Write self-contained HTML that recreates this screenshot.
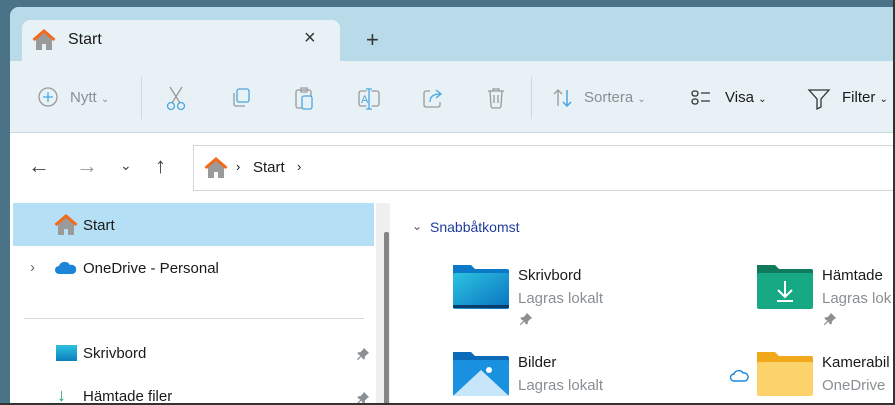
<!DOCTYPE html><html><head><meta charset="utf-8"><style>
*{margin:0;padding:0;box-sizing:border-box}
body{width:895px;height:405px;overflow:hidden;background:#4a7388;font-family:"Segoe UI","Liberation Sans",sans-serif;position:relative;color:#1a1a1a}
.win{position:absolute;left:10px;top:7px;width:883px;height:396px;background:#fff;border-radius:9px 0 0 0;overflow:hidden}
.title{position:absolute;left:0;top:0;width:100%;height:54px;background:#b9dae9}
.tab{position:absolute;left:12px;top:13px;width:318px;height:42px;background:#e7f1f6;border-radius:8px 8px 0 0}
.tb{position:absolute;left:0;top:54px;width:100%;height:72px;background:#e7f1f6;border-bottom:1px solid #c8d8e0}
.t{position:absolute;font-size:15px;white-space:nowrap}
.g{color:#8a8f93}
.ic{position:absolute}
.addr{position:absolute;left:183px;top:138px;width:710px;height:46px;border:1px solid #d6d6d6;border-right:none}
.sel{position:absolute;left:3px;top:196px;width:361px;height:43px;background:#b4dff5}
.sb{position:absolute;left:366px;top:196px;width:14px;height:200px;background:#f0f0f0}
.thumb{position:absolute;left:374px;top:225px;width:5px;height:175px;background:#858585;border-radius:2px}
</style></head><body>
<svg width="0" height="0" style="position:absolute"><defs><symbol id="pin" viewBox="0 0 16 16"><path d="M9 1l6 6-2 1-3 3 0 3-2 0-2-3-4 4-1-1 4-4-3-2 0-2 3 0 3-3z" fill="#8a8f93"/></symbol></defs></svg>
<div class="win">
<div class="title"></div>
<div class="tab"></div>
<svg class="ic" style="left:22px;top:22px" width="24" height="22" viewBox="0 0 24 22"><path d="M4 10v11h6v-6h4v6h6V10L12 3z" fill="#9a9a9a"/><path d="M1.5 11L12 2l10.5 9" fill="none" stroke="#f26b1d" stroke-width="3"/></svg>
<div class="t" style="left:58px;top:24px;font-size:16px">Start</div>
<div class="t" style="left:294px;top:20px;font-size:20px;color:#333">×</div>
<div class="t" style="left:356px;top:20px;font-size:22px;color:#333">+</div>
<div class="tb"></div>
<svg class="ic" style="left:28px;top:80px" width="20" height="20"><circle cx="10" cy="10" r="9" fill="none" stroke="#999" stroke-width="1.3"/><path d="M10 5v10M5 10h10" stroke="#4aa6e0" stroke-width="1.3"/></svg>
<div class="t g" style="left:60px;top:82px">Nytt <span style="font-size:10px">⌄</span></div>
<div style="position:absolute;left:131px;top:70px;width:1px;height:42px;background:#d0d8dd"></div>
<svg class="ic" style="left:155px;top:78px" width="22" height="26"><path d="M5 2l10 16M17 2L7 18" stroke="#999" stroke-width="1.3"/><circle cx="6" cy="21" r="3.5" fill="none" stroke="#4aa6e0" stroke-width="1.3"/><circle cx="16" cy="21" r="3.5" fill="none" stroke="#4aa6e0" stroke-width="1.3"/></svg>
<svg class="ic" style="left:220px;top:80px" width="22" height="22"><rect x="7" y="2" width="12" height="13" rx="2" fill="none" stroke="#4aa6e0" stroke-width="1.3"/><path d="M4 6v11a2 2 0 0 0 2 2h9" fill="none" stroke="#999" stroke-width="1.3"/></svg>
<svg class="ic" style="left:284px;top:80px" width="22" height="24"><rect x="2" y="3" width="15" height="18" rx="2" fill="none" stroke="#999" stroke-width="1.3"/><rect x="7" y="1" width="6" height="4" fill="none" stroke="#999" stroke-width="1.2"/><rect x="8" y="9" width="10" height="13" rx="2" fill="#e7f1f6" stroke="#4aa6e0" stroke-width="1.3"/></svg>
<svg class="ic" style="left:347px;top:80px" width="24" height="24"><rect x="2" y="4" width="20" height="15" rx="2" fill="none" stroke="#999" stroke-width="1.3"/><path d="M12 2v20" stroke="#e7f1f6" stroke-width="5"/><path d="M12 2v20M9 2h6M9 22h6" stroke="#4aa6e0" stroke-width="1.3"/><text x="4" y="16" font-size="11" fill="#4aa6e0" font-family="Liberation Sans">A</text></svg>
<svg class="ic" style="left:412px;top:80px" width="22" height="22"><path d="M8 4H4a2 2 0 0 0-2 2v12a2 2 0 0 0 2 2h12a2 2 0 0 0 2-2v-3" fill="none" stroke="#999" stroke-width="1.3"/><path d="M8 15c0-6 4-8 10-8M14 3l5 4-5 4" fill="none" stroke="#4aa6e0" stroke-width="1.3"/></svg>
<svg class="ic" style="left:476px;top:80px" width="20" height="22"><path d="M2 4h16M7 4V2h6v2M4 4l1 15a2 2 0 0 0 2 2h6a2 2 0 0 0 2-2l1-15M8 8v8M12 8v8" fill="none" stroke="#999" stroke-width="1.3"/></svg>
<div style="position:absolute;left:521px;top:70px;width:1px;height:42px;background:#d0d8dd"></div>
<svg class="ic" style="left:542px;top:81px" width="22" height="20"><path d="M6 18V2M2 6l4-4 4 4" fill="none" stroke="#999" stroke-width="1.3"/><path d="M15 2v16M11 14l4 4 4-4" fill="none" stroke="#4aa6e0" stroke-width="1.5"/></svg>
<div class="t g" style="left:574px;top:82px">Sortera <span style="font-size:10px">⌄</span></div>
<svg class="ic" style="left:681px;top:82px" width="22" height="18"><rect x="1" y="2" width="6" height="5" rx="2.5" fill="none" stroke="#333" stroke-width="1.3"/><rect x="1" y="10" width="6" height="5" rx="2.5" fill="none" stroke="#333" stroke-width="1.3"/><path d="M10 4h9M10 12h9" stroke="#333" stroke-width="1.3"/></svg>
<div class="t" style="left:715px;top:82px">Visa <span style="font-size:10px">⌄</span></div>
<svg class="ic" style="left:797px;top:80px" width="24" height="24"><path d="M2 3h20l-8 9v8l-4 2V12z" fill="none" stroke="#333" stroke-width="1.3"/></svg>
<div class="t" style="left:832px;top:82px">Filter <span style="font-size:10px">⌄</span></div>
<div class="t" style="left:18px;top:146px;font-size:22px;color:#444">←</div>
<div class="t" style="left:66px;top:146px;font-size:22px;color:#999">→</div>
<div class="t" style="left:110px;top:150px;font-size:14px;color:#444">⌄</div>
<div class="t" style="left:145px;top:146px;font-size:22px;color:#444">↑</div>
<div class="addr"></div>
<svg class="ic" style="left:194px;top:150px" width="24" height="22" viewBox="0 0 24 22"><path d="M4 10v11h6v-6h4v6h6V10L12 3z" fill="#9a9a9a"/><path d="M1.5 11L12 2l10.5 9" fill="none" stroke="#f26b1d" stroke-width="3"/></svg>
<div class="t" style="left:226px;top:152px;font-size:13px">›</div>
<div class="t" style="left:243px;top:152px">Start</div>
<div class="t" style="left:287px;top:152px;font-size:13px">›</div>
<div class="sel"></div>
<svg class="ic" style="left:44px;top:207px" width="24" height="22" viewBox="0 0 24 22"><path d="M4 10v11h6v-6h4v6h6V10L12 3z" fill="#9a9a9a"/><path d="M1.5 11L12 2l10.5 9" fill="none" stroke="#f26b1d" stroke-width="3"/></svg>
<div class="t" style="left:73px;top:210px">Start</div>
<div class="t" style="left:20px;top:252px;color:#666">›</div>
<svg class="ic" style="left:44px;top:254px" width="24" height="14"><path d="M5 13a4 4 0 0 1 0-8 6 6 0 0 1 11-1 4.5 4.5 0 0 1 3 9z" fill="#1b85d8"/></svg>
<div class="t" style="left:73px;top:253px">OneDrive - Personal</div>
<div style="position:absolute;left:14px;top:311px;width:340px;height:1px;background:#d8d8d8"></div>
<div style="position:absolute;left:46px;top:338px;width:21px;height:16px;background:linear-gradient(#2fc0e0,#0a7fbf)"></div>
<div class="t" style="left:73px;top:338px">Skrivbord</div>
<svg class="ic" style="left:346px;top:340px" width="14" height="14"><use href="#pin"/></svg>
<svg class="ic" style="left:346px;top:384px" width="14" height="14"><use href="#pin"/></svg>
<div class="t" style="left:47px;top:378px;color:#1ea46a;font-size:18px">↓</div>
<div class="t" style="left:73px;top:381px">Hämtade filer</div>
<div class="sb"></div><div class="thumb"></div>
<div class="t" style="left:402px;top:212px;color:#555;font-size:12px">⌄</div>
<div class="t" style="left:420px;top:212px;color:#1f3d9a;font-size:14px">Snabbåtkomst</div>
<svg class="ic" style="left:441px;top:256px" width="60" height="48"><path d="M2 2h18l4 4h32a2 2 0 0 1 2 2v36H2z" fill="#0b78c8"/><rect x="2" y="10" width="56" height="36" rx="2" fill="url(#a)"/><defs><linearGradient id="a" x1="0" y1="0" x2="1" y2="1"><stop offset="0" stop-color="#2cc3e0"/><stop offset="1" stop-color="#0a72c0"/></linearGradient></defs><rect x="2" y="42" width="56" height="3" fill="#0a3d6a"/></svg>
<div class="t" style="left:508px;top:260px">Skrivbord</div>
<div class="t g" style="left:508px;top:283px">Lagras lokalt</div>
<svg class="ic" style="left:509px;top:305px" width="14" height="14"><use href="#pin"/></svg>
<svg class="ic" style="left:745px;top:256px" width="60" height="48"><path d="M2 2h18l4 4h32a2 2 0 0 1 2 2v36H2z" fill="#0f7a5c"/><rect x="2" y="10" width="56" height="36" rx="2" fill="#17a884"/><path d="M30 18v16M23 27l7 7 7-7M22 38h16" fill="none" stroke="#fff" stroke-width="2"/></svg>
<div class="t" style="left:812px;top:260px">Hämtade</div>
<div class="t g" style="left:812px;top:283px">Lagras lok</div>
<svg class="ic" style="left:813px;top:305px" width="14" height="14"><use href="#pin"/></svg>
<svg class="ic" style="left:441px;top:343px" width="60" height="48"><path d="M2 2h18l4 4h32a2 2 0 0 1 2 2v36H2z" fill="#0b6bb8"/><rect x="2" y="10" width="56" height="36" rx="2" fill="#1a90e0"/><path d="M2 46l28-26 28 26z" fill="#c8e6fa"/><circle cx="38" cy="20" r="3" fill="#fff"/></svg>
<div class="t" style="left:508px;top:347px">Bilder</div>
<div class="t g" style="left:508px;top:370px">Lagras lokalt</div>
<svg class="ic" style="left:719px;top:362px" width="20" height="14"><path d="M5 12a3.5 3.5 0 0 1 0-7 5 5 0 0 1 9-1 4 4 0 0 1 2 8z" fill="none" stroke="#1b85d8" stroke-width="1.4"/></svg>
<svg class="ic" style="left:745px;top:343px" width="60" height="48"><path d="M2 2h18l4 4h32a2 2 0 0 1 2 2v36H2z" fill="#f2a81c"/><rect x="2" y="12" width="56" height="34" rx="2" fill="#fcd26a"/></svg>
<div class="t" style="left:812px;top:347px">Kamerabil</div>
<div class="t g" style="left:812px;top:370px">OneDrive</div>
</div>
<div style="position:absolute;left:0;top:403px;width:895px;height:2px;background:#333"></div>
<div style="position:absolute;left:893px;top:0;width:2px;height:405px;background:#333"></div>
</body></html>
